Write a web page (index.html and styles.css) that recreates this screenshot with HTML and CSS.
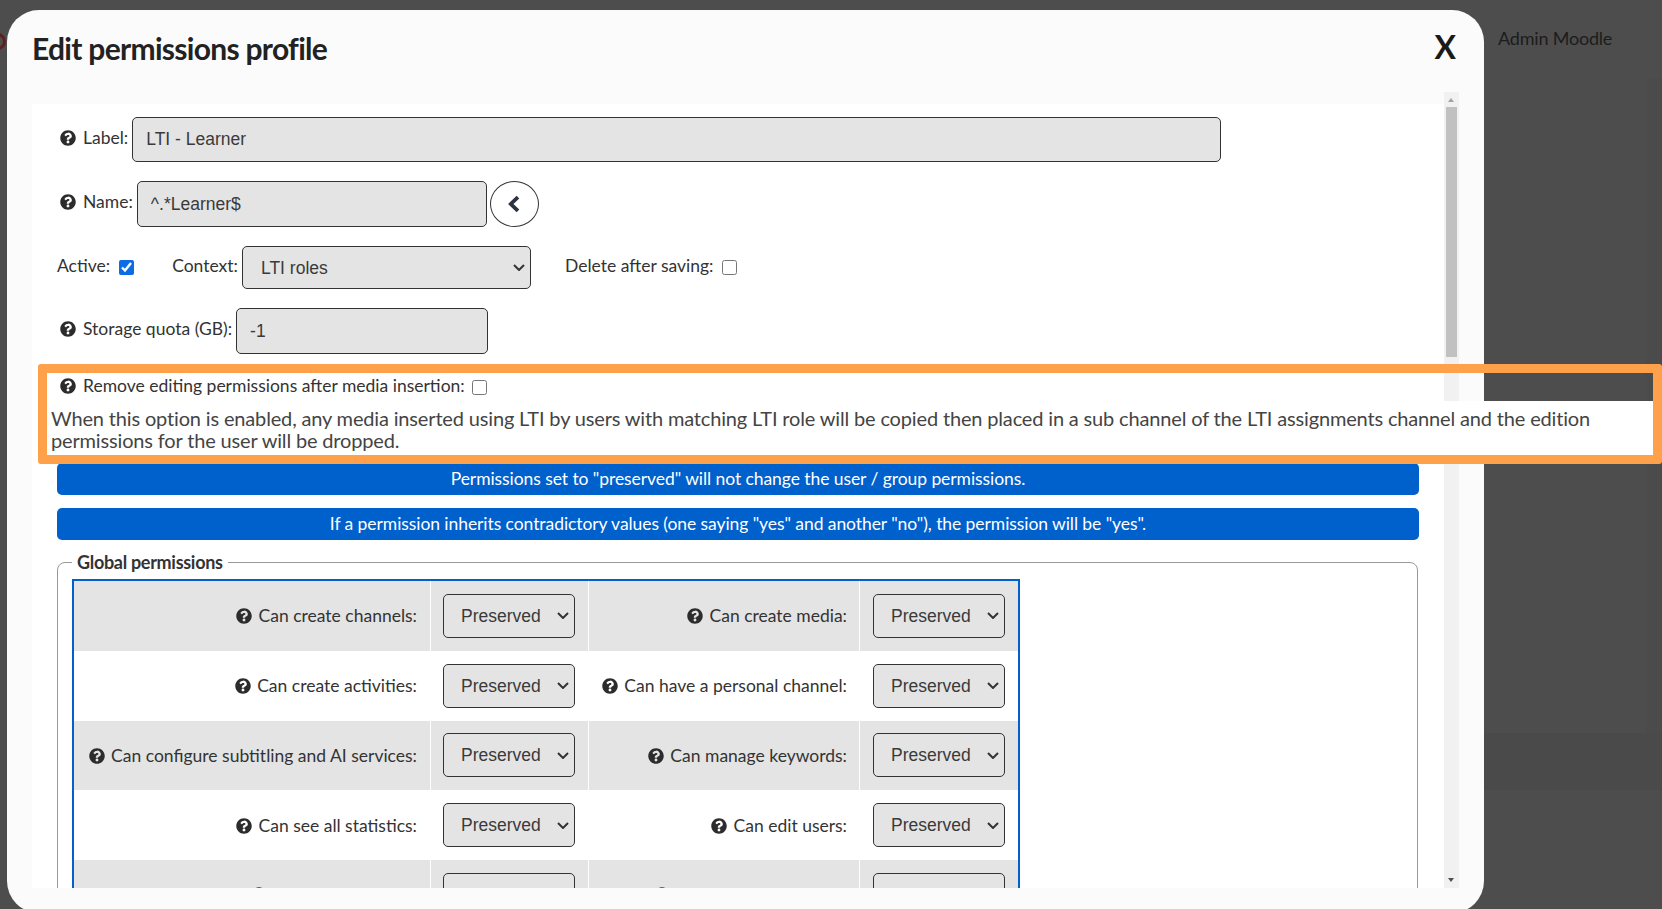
FILE: index.html
```html
<!DOCTYPE html>
<html lang="en">
<head>
<meta charset="utf-8">
<title>Edit permissions profile</title>
<link rel="stylesheet" href="styles.css">
</head>
<body>
<svg class="defs" aria-hidden="true">
  <symbol id="help" viewBox="0 0 512 512"><path d="M504 256c0 136.997-111.043 248-248 248S8 392.997 8 256C8 119.083 119.043 8 256 8s248 111.083 248 248zM262.655 90c-54.497 0-89.255 22.957-116.549 63.758-3.536 5.286-2.353 12.415 2.715 16.258l34.699 26.31c5.205 3.947 12.621 3.008 16.665-2.122 17.864-22.658 30.113-35.797 57.303-35.797 20.429 0 45.698 13.148 45.698 32.958 0 14.976-12.363 22.667-32.534 33.976C247.128 238.528 216 254.941 216 296v4c0 6.627 5.373 12 12 12h56c6.627 0 12-5.373 12-12v-1.333c0-28.462 83.186-29.647 83.186-106.667 0-58.002-60.165-111-116.531-111zM256 338c-25.365 0-46 20.635-46 46 0 25.364 20.635 46 46 46s46-20.636 46-46c0-25.365-20.635-46-46-46z"/></symbol>
</svg>
<div class="page">
  <div class="backdrop-logo"></div>
  <div class="backdrop-strip"></div>
  <div class="backdrop-band"></div>
  <div class="backdrop-user">Admin Moodle</div>

  <div class="modal">
    <div class="modal-head">
      <h1 class="modal-title">Edit permissions profile</h1>
      <span class="modal-close">X</span>
    </div>
    <div class="modal-body">
      <form class="form">
        <div class="row row-label">
          <svg class="help"><use href="#help"/></svg>
          <label class="lbl">Label:</label>
          <input class="field field-label" type="text" value="LTI - Learner">
        </div>
        <div class="row row-name">
          <svg class="help"><use href="#help"/></svg>
          <label class="lbl">Name:</label>
          <input class="field field-name" type="text" value="^.*Learner$">
          <button class="round-btn" type="button"><svg class="chev" viewBox="0 0 11 14"><path d="M8.6 1.6 3 7l5.6 5.4"/></svg></button>
        </div>
        <div class="row row-active">
          <label class="lbl">Active:</label>
          <input class="check check-active" type="checkbox" checked>
          <label class="lbl lbl-context">Context:</label>
          <select class="field field-context"><option>LTI roles</option></select>
          <label class="lbl lbl-delete">Delete after saving:</label>
          <input class="check" type="checkbox">
        </div>
        <div class="row row-quota">
          <svg class="help"><use href="#help"/></svg>
          <label class="lbl">Storage quota (GB):</label>
          <input class="field field-quota" type="text" value="-1">
        </div>
        <div class="callout-space"></div>
        <div class="notice">Permissions set to "preserved" will not change the user / group permissions.</div>
        <div class="notice notice-second">If a permission inherits contradictory values (one saying "yes" and another "no"), the permission will be "yes".</div>
        <fieldset class="group">
          <legend class="group-title">Global permissions</legend>
          <table class="perms">
            <tr>
              <td class="perm-name"><svg class="help"><use href="#help"/></svg> Can create channels:</td>
              <td class="perm-val"><select class="field perm-select"><option>Preserved</option></select></td>
              <td class="perm-name"><svg class="help"><use href="#help"/></svg> Can create media:</td>
              <td class="perm-val"><select class="field perm-select"><option>Preserved</option></select></td>
            </tr>
            <tr>
              <td class="perm-name"><svg class="help"><use href="#help"/></svg> Can create activities:</td>
              <td class="perm-val"><select class="field perm-select"><option>Preserved</option></select></td>
              <td class="perm-name"><svg class="help"><use href="#help"/></svg> Can have a personal channel:</td>
              <td class="perm-val"><select class="field perm-select"><option>Preserved</option></select></td>
            </tr>
            <tr>
              <td class="perm-name"><svg class="help"><use href="#help"/></svg> Can configure subtitling and AI services:</td>
              <td class="perm-val"><select class="field perm-select"><option>Preserved</option></select></td>
              <td class="perm-name"><svg class="help"><use href="#help"/></svg> Can manage keywords:</td>
              <td class="perm-val"><select class="field perm-select"><option>Preserved</option></select></td>
            </tr>
            <tr>
              <td class="perm-name"><svg class="help"><use href="#help"/></svg> Can see all statistics:</td>
              <td class="perm-val"><select class="field perm-select"><option>Preserved</option></select></td>
              <td class="perm-name"><svg class="help"><use href="#help"/></svg> Can edit users:</td>
              <td class="perm-val"><select class="field perm-select"><option>Preserved</option></select></td>
            </tr>
            <tr>
              <td class="perm-name"><svg class="help"><use href="#help"/></svg> Can manage users:</td>
              <td class="perm-val"><select class="field perm-select"><option>Preserved</option></select></td>
              <td class="perm-name"><svg class="help"><use href="#help"/></svg> Can manage channels:</td>
              <td class="perm-val"><select class="field perm-select"><option>Preserved</option></select></td>
            </tr>
          </table>
        </fieldset>
      </form>
      <div class="scrollbar">
        <span class="arrow-up"></span>
        <div class="thumb"></div>
        <span class="arrow-down"></span>
      </div>
    </div>
  </div>

  <div class="callout">
    <div class="callout-row">
      <svg class="help"><use href="#help"/></svg>
      <label class="lbl">Remove editing permissions after media insertion:</label>
      <input class="check" type="checkbox">
    </div>
    <div class="callout-text">When this option is enabled, any media inserted using LTI by users with matching LTI role will be copied then placed in a sub channel of the LTI assignments channel and the edition permissions for the user will be dropped.</div>
  </div>
</div>
</body>
</html>
```
FILE: styles.css
```css
html, body {
  margin: 0;
  height: 100%;
  overflow: hidden;
}
body {
  background: #4d4d4d;
  font-family: Lato, "Liberation Sans", sans-serif;
  color: #333;
}
.defs {
  position: absolute;
  width: 0;
  height: 0;
}
.page {
  position: relative;
  width: 1662px;
  height: 909px;
  overflow: hidden;
}
.backdrop-logo {
  position: absolute;
  left: -11px;
  top: 33px;
  width: 17px;
  height: 17px;
  border-radius: 50%;
  border: 3px solid #5f1e1e;
  box-sizing: border-box;
}
.backdrop-strip {
  position: absolute;
  left: 1646px;
  top: 78px;
  width: 16px;
  height: 655px;
  background: #4b4b4b;
}
.backdrop-band {
  position: absolute;
  left: 1484px;
  top: 733px;
  width: 178px;
  height: 57px;
  background: #4a4a4a;
}
.backdrop-user {
  position: absolute;
  left: 1498px;
  top: 27px;
  font-size: 18px;
  line-height: 22px;
  letter-spacing: -0.2px;
  color: #1c1c1c;
}

.modal {
  position: absolute;
  left: 7px;
  top: 10px;
  width: 1477px;
  height: 903px;
  box-sizing: border-box;
  background: #fbfbfb;
  border-radius: 32px;
  padding: 0 25px 25px 25px;
  display: flex;
  flex-direction: column;
}
.modal-head {
  display: flex;
  justify-content: space-between;
  align-items: center;
  height: 72px;
  flex: none;
}
.modal-title {
  margin: 4px 0 0;
  font-size: 30px;
  line-height: 68px;
  font-weight: 700;
  color: #222;
  letter-spacing: -0.7px;
}
.modal-close {
  font-size: 32px;
  font-weight: 700;
  color: #1a1a1a;
  line-height: 1;
  margin: 2px 3px 0 0;
}
.modal-body {
  flex: 1;
  min-height: 0;
  display: flex;
  padding-top: 10px;
}
.form {
  flex: 1;
  min-width: 0;
  margin-top: 12px;
  background: #fff;
  overflow: hidden;
  padding: 13px 25px 0 25px;
}

.row {
  display: flex;
  align-items: center;
}
.row-name { margin-top: 19px; }
.row-active { margin-top: 19px; }
.row-quota { margin-top: 19px; }
.row .lbl, .row .help, .callout-row .lbl, .callout-row .help {
  margin-bottom: 3px;
}
.row-name .lbl, .row-name .help, .row-quota .lbl, .row-quota .help {
  margin-bottom: 5px;
}
.help {
  width: 16px;
  height: 16px;
  fill: #2c2c2c;
  flex: none;
  vertical-align: -2px;
  margin-left: 3px;
  margin-right: 7px;
}
.lbl {
  font-size: 17.5px;
  line-height: 22px;
  color: #333;
}
.field {
  box-sizing: border-box;
  font-family: "Liberation Sans", Arial, sans-serif;
  font-size: 17.5px;
  color: #3a3a3a;
  background-color: #e4e4e4;
  border: 1px solid #333;
  border-radius: 5px;
}
input.field {
  padding: 0 13px;
  outline: none;
}
select.field {
  appearance: none;
  background-image: url("data:image/svg+xml,%3Csvg xmlns='http://www.w3.org/2000/svg' viewBox='0 0 12 7'%3E%3Cpath d='M1 1l5 5 5-5' fill='none' stroke='%23333' stroke-width='2'/%3E%3C/svg%3E");
  background-repeat: no-repeat;
  background-size: 12px 7px;
  background-position: right 5px center;
}
.field-label { width: 1089px; height: 45px; margin-left: 4px; }
.field-name { width: 350px; height: 46px; margin-left: 4px; }
.field-quota { width: 252px; height: 46px; margin-left: 4px; }
.field-context {
  width: 289px;
  height: 43px;
  margin-left: 4px;
  padding-left: 18px;
}
.round-btn {
  width: 49px;
  height: 46px;
  margin-left: 3px;
  padding: 0;
  border: 1px solid #333;
  border-radius: 50%;
  background: #fff;
  display: flex;
  align-items: center;
  justify-content: center;
}
.chev {
  width: 14px;
  height: 18px;
  fill: none;
  stroke: #2c3440;
  stroke-width: 3;
}
.check {
  width: 15px;
  height: 15px;
  margin: 0;
  flex: none;
  accent-color: #0b6ce5;
}
.check-active { margin-left: 9px; }
.lbl-context { margin-left: 38px; }
.lbl-delete { margin-left: 34px; margin-right: 9px; }
.callout-space { height: 109px; }

.notice {
  background: #0060cc;
  color: #fff;
  border-radius: 5px;
  height: 32px;
  line-height: 32px;
  font-size: 17.5px;
  letter-spacing: -0.07px;
  text-align: center;
}
.notice-second { margin-top: 13px; }

.group {
  margin: 11px 1px 0 0;
  padding: 6px 14px 0 14px;
  border: 1px solid #999;
  border-radius: 8px;
  min-width: 0;
}
.group-title {
  margin-left: 0;
  padding: 0 5px;
  font-size: 18px;
  line-height: 22px;
  font-weight: 700;
  color: #333;
  letter-spacing: -0.3px;
}
.perms {
  border: 2px solid #0060cc;
  border-collapse: separate;
  border-spacing: 0;
  table-layout: fixed;
  width: 946px;
}
.perms tr:nth-child(odd) td { background-color: #e4e4e4; }
.perms td {
  height: 69.75px;
  padding: 0;
  box-sizing: border-box;
  vertical-align: middle;
}
.perm-name {
  width: 357px;
  text-align: right;
  font-size: 17.5px;
  border-right: 1px solid #fff;
}
.perms .perm-name { padding-right: 13px; }
.perms td:nth-child(3) { padding-right: 12px; }
.perm-name .help { margin: 0 2px 0 0; }
.perm-val {
  width: 158px;
  border-right: 1px solid #fff;
}
.perms td:nth-child(3) { width: 271px; }
.perms td:last-child { border-right: 0; }
.perm-select {
  display: block;
  width: 132px;
  height: 44px;
  margin-left: 12px;
  padding-left: 17px;
}
.perms td:last-child .perm-select { margin-left: 13px; }

.scrollbar {
  width: 15px;
  flex: none;
  background: #f1f1f1;
  position: relative;
}
.arrow-up, .arrow-down {
  position: absolute;
  left: 4px;
  width: 0;
  height: 0;
  border-left: 3.5px solid transparent;
  border-right: 3.5px solid transparent;
}
.arrow-up { top: 6px; border-bottom: 4px solid #a3a3a3; }
.arrow-down { bottom: 6px; border-top: 4px solid #505050; }
.thumb {
  position: absolute;
  left: 2px;
  top: 15px;
  width: 11px;
  height: 250px;
  background: #c1c1c1;
}

.callout {
  position: absolute;
  left: 38px;
  top: 364px;
  width: 1624px;
  height: 100px;
  box-sizing: border-box;
  border: 9px solid #ffa04a;
  border-radius: 3px;
  display: flex;
  flex-direction: column;
  z-index: 2;
}
.callout-row {
  height: 28px;
  flex: none;
  display: flex;
  align-items: center;
  padding-left: 10px;
  box-sizing: border-box;
}
.callout-row .check { margin-left: 7px; }
.callout-text {
  flex: 1;
  background: #fff;
  padding: 6px 5px 0 4px;
  font-size: 20px;
  line-height: 22px;
  letter-spacing: -0.16px;
  color: #444;
}
```
